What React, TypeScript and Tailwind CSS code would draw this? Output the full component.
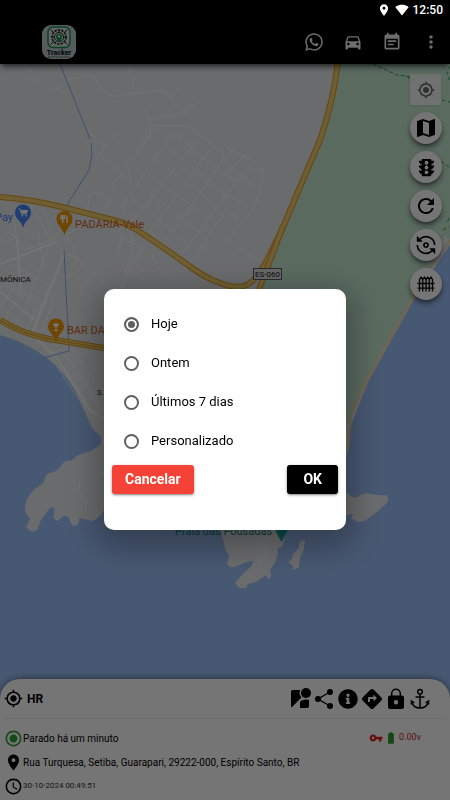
import React, { useState } from 'react';
import { FaInfoCircle, FaWhatsapp } from 'react-icons/fa';
import {
  MdAccessTime,
  MdBatteryFull,
  MdDirections,
  MdDirectionsCar,
  MdEventNote,
  MdLocationOn,
  MdMap,
  MdMoreVert,
  MdMyLocation,
  MdRadioButtonChecked,
  MdRefresh,
  MdSignalWifi4Bar,
  MdStreetview,
  MdTraffic,
  MdVpnKey,
} from 'react-icons/md';

const periods = ['Hoje', 'Ontem', 'Últimos 7 dias', 'Personalizado'];

const FenceIcon = () => (
  <svg width="20" height="20" viewBox="0 0 20 20" fill="none" stroke="currentColor" strokeWidth="1.300">
    <path d="M3.500 17.500V5.500L5.100 3.200 6.750 5.500 8.400 3.200 10 5.500 11.600 3.200 13.250 5.500 14.900 3.200 16.500 5.500V17.500M6.750 5.500V17.500M10 5.500V17.500M13.250 5.500V17.500M1.500 9.500H18.500M1.500 14.200H18.500" />
  </svg>
);

const RotateIcon = () => (
  <svg width="22" height="22" viewBox="0 0 24 24" fill="none" stroke="currentColor" strokeWidth="1.800">
    <path d="M5.500 5.500A9.500 9.500 0 0121.500 12M18.500 18.500A9.500 9.500 0 012.500 12" />
    <path d="M2 2v6.500h6.500zM22 22v-6.500h-6.500z" fill="currentColor" stroke="none" />
    <circle cx="12" cy="12" r="2.200" />
  </svg>
);

const ShareIcon = () => (
  <svg width="24" height="24" viewBox="0 0 24 24" fill="currentColor">
    <path d="M18 5L6 12l12 7" fill="none" stroke="currentColor" strokeWidth="1.400" />
    <circle cx="18" cy="5" r="3" />
    <circle cx="6" cy="12" r="3" />
    <circle cx="18" cy="19" r="3" />
  </svg>
);

const LockIcon = () => (
  <svg width="24" height="24" viewBox="0 0 24 24" fill="currentColor">
    <path d="M7.700 9V6.500a4.300 4.300 0 018.600 0V9" fill="none" stroke="currentColor" strokeWidth="1.500" />
    <path fillRule="evenodd" d="M6 8.500h12a2 2 0 012 2V20a2 2 0 01-2 2H6a2 2 0 01-2-2v-9.500a2 2 0 012-2zM12 13a2.200 2.200 0 100 4.400 2.200 2.200 0 000-4.400z" />
  </svg>
);

const AnchorIcon = () => (
  <svg width="24" height="24" viewBox="0 0 24 24" fill="none" stroke="currentColor" strokeWidth="1.500">
    <circle cx="12" cy="4.700" r="2.300" />
    <path d="M12 7v14M7.500 10h9M4 15.500c.8 3.500 4 5.500 8 5.500s7.200-2 8-5.500" />
    <path d="M2.700 12.500v5.200l4.300-2.200zM21.300 12.500v5.200L17 15.500z" fill="currentColor" stroke="none" />
  </svg>
);

const Logo = () => (
  <svg className="size-[34px]" viewBox="0 0 34 34" role="img" aria-label="Tracker">
    <rect width="34" height="34" rx="9" fill="#bcc6c8" />
    <rect x="6" y="2" width="22" height="20.500" rx="5" fill="#d3dbd8" stroke="#0f8f4a" strokeWidth="1.4" />
    <circle cx="17" cy="12" r="7" fill="none" stroke="#20282a" strokeWidth="1.6" strokeDasharray="2.5 1" />
    <circle cx="17" cy="12" r="4.600" fill="none" stroke="#20282a" strokeWidth="1" />
    <path d="M8.500 4.500l3 3M25.500 4.500l-3 3M8.500 19.500l3-3M25.500 19.500l-3-3M17 5v3M9.500 12h3M21.500 12h3" stroke="#20282a" strokeWidth="1" />
    <path d="M17 17c-2-2.500-3-3.700-3-5.300a3 3 0 016 0c0 1.600-1 2.800-3 5.300z" fill="#0f8f4a" />
    <circle cx="17" cy="11.500" r="1.200" fill="#e8efec" />
    <text x="17" y="30" textAnchor="middle" fontSize="7" fontWeight="900" fontFamily="Roboto, sans-serif" fill="#141a1c">
      Tracker
    </text>
    <path d="M6 32h22" stroke="#3b5f60" strokeWidth="1" strokeDasharray="2 .6" />
  </svg>
);

const coast =
  'M0 60H450V245L441 258L417 294L393 337L369 380L359 405L350 428L348 450L340 475L300 530L180 530L103 511Q101 518 92 521Q86 519 79 518Q80 525 74 526Q71 525 69 518Q65 514 62 517L58 521L53 518L55 510Q53 505 50 508L41 520L37 530Q32 534 26 527L30 519Q24 512 25 506Q27 497 34 490L44 482Q45 475 49 473Q57 472 60 467Q66 458 71 461L78 455L91 451Q95 448 99 446Q103 441 100 436L93 429Q86 416 80 401Q71 380 55 365Q32 344 0 335Z';

const highways = [
  'M338 60Q335 95 320 140L303 180L281 232L266 262Q256 280 247 285Q235 290 215 281Q204 277 188 265Q157 243 137 230Q125 222 105 218L66 208Q30 199 0 197',
  'M283 226L271 258L258 292',
  'M0 320Q20 333 49 339L110 349',
];

const streets = [
  // north
  'M29 66Q33 80 45 86Q57 94 62 84Q66 78 78 78Q88 72 95 78Q99 87 105 93Q113 99 126 94L150 92Q164 88 171 98Q175 109 187 110L206 97M126 94Q135 93 133 82Q128 74 129 64M171 98L181 85M187 110L192 103M156 92Q165 87 171 94',
  'M143 109Q151 116 150 126L149 136M150 119L186 113M149 126L190 126L212 143M82 139L110 163L131 182M90 133L97 139L107 150M116 132L97 158M149 136L124 166',
  'M91 191L110 197L106 207M91 191L87 211M131 182L128 173L134 163',
  // east grid
  'M225 146L252 160Q264 163 263 174Q262 195 250 213Q239 226 227 241L258 260M232 150L225 160M245 155L230 170M252 165L238 182L225 173M262 171L252 168M258 188L225 163M248 207L228 195M240 221L225 208',
  'M166 148L208 180L228 198M156 160L199 192L218 207M146 172L190 205L208 219M138 184L181 218L199 232M130 197L172 231L189 245M123 209L162 243L180 257M176 134L215 168L235 182M186 124L225 155',
  'M160 124L109 190M176 131L120 207M198 139L132 222M212 147L150 232M225 157L165 242M236 182L176 262M225 211L185 270M209 242L195 260',
  // west town
  'M0 228L17 238L25 250L51 240L66 224M0 264L31 252L56 242M17 238L21 295M0 277L20 291L40 300M56 242L64 254L31 340M31 205L50 241M10 202L17 238M42 208L56 242M13 265L51 286M51 240L28 300M38 232L44 267L20 278M0 245L17 236M64 254Q82 258 82 266L65 278M66 235L82 226',
  'M0 279L35 308M0 292L34 319M0 306L27 330M10 272L0 289M18 280L0 308M26 287L5 319M34 294L14 327M37 306L25 335M4 285L36 301M0 324L30 333L55 355L74 387L91 411L105 420M41 301L27 329M48 290L36 320M55 294L42 333',
  'M53 341L73 365L90 392L99 409L92 413L76 396L60 371L43 345M60 337L79 358L95 384M68 348L50 353M77 356L61 368M82 369L67 379M90 382L76 392M96 393L82 402M75 362L88 350',
  // centre
  'M123 209Q125 217 132 222M118 222L121 238L118 254L113 262M132 226L132 254L125 273M121 238L145 248M145 248L131 265L120 290M152 255Q157 270 171 280M136 262L144 270L132 276M97 270Q84 280 80 296M104 282L94 290M66 237Q80 253 73 268',
  // south peninsula
  'M110 470L98 475L82 479Q77 486 80 492L86 500L86 506M257 549L267 546L266 556L259 562Z M262 538L269 540L274 530M256 535L262 550',
];

const TrackerMap = () => (
  <svg
    className="absolute inset-0 size-full"
    viewBox="0 64 450 636"
    preserveAspectRatio="xMidYMin slice"
    fontFamily="Roboto, sans-serif"
    aria-hidden="true"
  >
    <rect y="60" width="450" height="700" fill="#9cc0f9" />
    <path d={coast} fill="#e8eaed" />
    <path d="M338 60Q335 95 320 140L303 180L283 232L258 292L230 440L345 440L347 425L356 405L368 377L392 333L415 293L450 238V60Z" fill="#c5e8d0" />
    <path d="M450 240L432 265L416 292L392 335L368 378L351 414L347 450" fill="none" stroke="#efdcb5" strokeWidth="3" />
    <path d="M447 237L435 260" stroke="#e8eaed" strokeWidth="5" />

    <g fill="#e8eaed">
      <path d="M340 490L348 493Q352 499 357 497L360 495Q366 492 372 494Q379 496 386 495Q390 498 387 503L378 511L370 517Q362 524 356 521L351 518L353 514L340 516Z" />
      <path d="M220 525L225 548L229 556L227 564Q230 568 235 567L247 562L253 561Q253 566 247 570L242 575L235 583L239 588L246 588L248 584L256 582L266 575L268 579Q273 578 270 570Q278 561 278 548L282 547L287 530Z" />
      <path d="M305 539L300 542L298 549L293 554L292 559L288 562L293 566V570L299 567L300 558L304 549Z" />
    </g>

    <g fill="none" stroke="#fff" strokeLinejoin="round" strokeWidth="1" opacity=".7">
      {streets.map((d) => (
        <path key={d} d={d} />
      ))}
    </g>
    <path d="M0 264L31 252L56 242M17 238L21 290M64 254L31 335M0 292L34 319M30 333L55 355L91 411L105 420" fill="none" stroke="#fff" strokeWidth="2" opacity=".7" />

    <path d="M60 64L90 139M91 143L92 154L89 170L67 205M64 250L68 330L69 351L43 358" fill="none" stroke="#86aef2" strokeWidth="1" />
    <path d="M373 64L397 75L407 76L411 82M436 159L440 160M443 230L449 227M441 161L450 168M449 218L447 223" fill="none" stroke="#2c9c5b" strokeWidth="1" strokeDasharray="4 2" />
    <path d="M408 76L438 99L450 102M450 66L447 73L450 82" fill="none" stroke="#2c9c5b" strokeWidth="1" strokeDasharray="3 3" />

    {highways.map((d) => (
      <g key={d} fill="none">
        <path d={d} stroke="#d99a1c" strokeWidth="6" />
        <path d={d} stroke="#f2cd70" strokeWidth="4" />
      </g>
    ))}
    <path d="M0 320Q20 333 49 339L110 349" fill="none" stroke="#d99a1c" strokeWidth="1" />

    <rect x="253.500" y="268.500" width="28" height="11" fill="#dfe1e3" stroke="#5c5c5c" />
    <text x="267.500" y="277" textAnchor="middle" fontSize="8" fill="#202124">ES-060</text>

    {/* Points of interest */}
    <g fill="#4285f4">
      <path d="M23 228C21 220 15 219 15 212.500a8 8 0 0116 0C31 219 25 220 23 228Z" />
      <path d="M18.500 209h1.500l1.500 5h5.500" fill="none" stroke="#fff" strokeWidth="1" />
      <path d="M20.500 210h7.500l-1 3.500h-5.500zM21.500 215h1.500v1.500h-1.500zM25.500 215h1.500v1.500h-1.500z" fill="#fff" />
      <text x="-5" y="221" fontSize="11">Pay</text>
    </g>
    <g fill="#f29900">
      <path d="M64.500 235C62 227 56.500 225 56.500 219a8 8 0 0116 0C72.500 225 67 227 64.500 235Z" />
      <path d="M56 342C54 334 48 332 48 326.500a8 8 0 0116 0C64 332 58 334 56 342Z" />
      <path d="M61 215v3.500h3.500V215M62.750 215v8M67 223v-7.500" fill="none" stroke="#fff" strokeWidth="1.500" />
      <path d="M53 324h6l-3 3.500zM56 327v3.500M54 330.500h4" fill="#fff" stroke="#fff" strokeWidth="1" />
    </g>
    <g fill="#d5641c" fontSize="11">
      <text x="75" y="228">PADARIA-Vale</text>
      <text x="67" y="334">BAR DA</text>
    </g>
    <g fill="#202124" fontSize="8">
      <text x="0" y="282">MÔNICA</text>
      <text x="97" y="395">S.</text>
    </g>
    <path d="M281.500 542L274 528H289Z" fill="#12a3a8" />
    <text x="175" y="535" fontSize="11" fill="#158a80">Praia das Pousadas</text>
  </svg>
);

const mapActions = [
  { label: 'Tipo de mapa', icon: <MdMap size={24} /> },
  { label: 'Trânsito', icon: <MdTraffic size={23} /> },
  { label: 'Atualizar', icon: <MdRefresh size={24} /> },
  { label: 'Girar', icon: <RotateIcon /> },
  { label: 'Cerca', icon: <FenceIcon /> },
];

const vehicleActions = [
  { label: 'Street view', icon: <MdStreetview size={24} /> },
  { label: 'Compartilhar', icon: <ShareIcon /> },
  { label: 'Informações', icon: <FaInfoCircle size={20} /> },
  { label: 'Rota', icon: <MdDirections size={24} /> },
  { label: 'Bloquear', icon: <LockIcon /> },
  { label: 'Âncora', icon: <AnchorIcon /> },
];

const PeriodDialog: React.FC = () => {
  const [period, setPeriod] = useState('Hoje');

  return (
    <div className="fixed inset-0 z-10 flex items-center justify-center bg-black/54 pt-[18px]">
      <form
        role="dialog"
        aria-label="Período"
        className="w-[242px] rounded-[10px] bg-white px-2 pt-4 pb-9 shadow-[0_10px_32px_8px_rgba(0,0,0,0.3)]"
        onSubmit={(e) => e.preventDefault()}
      >
        {periods.map((item) => (
          <label key={item} className="flex h-[39px] items-center gap-3 pl-3 text-[13px] text-black">
            <input
              type="radio"
              name="period"
              value={item}
              checked={period === item}
              onChange={() => setPeriod(item)}
              className="size-[15px] appearance-none rounded-full border-2 border-[#606060] checked:bg-[#606060] checked:shadow-[inset_0_0_0_2px_#fff]"
            />
            {item}
          </label>
        ))}
        <div className="mt-1 flex justify-between text-sm font-bold text-white">
          <button type="button" className="h-[29px] rounded-[3px] bg-[#f44336] px-[13px] shadow-sm shadow-black/40">
            Cancelar
          </button>
          <button type="submit" className="h-[29px] rounded-[3px] bg-black px-4 shadow-sm shadow-black/40">
            OK
          </button>
        </div>
      </form>
    </div>
  );
};

const App: React.FC = () => {
  return (
    <div className="flex min-h-screen flex-col bg-white font-[Roboto,sans-serif] text-black">
      {/* Status bar */}
      <div className="relative z-20 flex h-5 items-center justify-end gap-1 bg-black pr-[7px] text-white">
        <MdLocationOn size={14} />
        <MdSignalWifi4Bar size={14} />
        <span className="text-xs font-medium">12:50</span>
      </div>

      <header className="relative z-[1] flex h-11 items-center justify-between bg-black pr-[7px] pl-[42px] shadow-md shadow-black/50">
        <Logo />
        <nav className="flex items-center gap-[15px] text-[#f0f0f0]">
          <button type="button" aria-label="WhatsApp" className="flex size-6 items-center justify-center">
            <FaWhatsapp size={20} />
          </button>
          <button type="button" aria-label="Veículos" className="flex size-6 items-center justify-center">
            <MdDirectionsCar size={20} />
          </button>
          <button type="button" aria-label="Eventos" className="flex size-6 items-center justify-center">
            <MdEventNote size={20} />
          </button>
          <button type="button" aria-label="Mais opções" className="flex size-6 items-center justify-center">
            <MdMoreVert size={20} />
          </button>
        </nav>
      </header>

      <main className="relative flex-1 overflow-hidden">
        <TrackerMap />
        <div className="absolute top-2.5 right-2 flex flex-col items-start gap-[7px]">
          <button type="button" aria-label="Minha localização" className="flex size-[31px] items-center justify-center rounded-[1px] bg-white/75 text-[#666] shadow-sm">
            <MdMyLocation size={18} />
          </button>
          {mapActions.map(({ label, icon }) => (
            <button
              key={label}
              type="button"
              aria-label={label}
              className="flex size-8 items-center justify-center rounded-full bg-white shadow-md shadow-black/50"
            >
              {icon}
            </button>
          ))}
        </div>
      </main>

      {/* Vehicle sheet */}
      <section className="relative -mt-5 rounded-t-[20px] bg-white px-1 pb-0.5 shadow-[0_-1px_6px_rgba(0,0,0,0.4)]">
        <div className="flex h-10 items-center justify-between border-b border-[#ececec] pr-3.5">
          <h1 className="flex items-center gap-1 text-xs font-bold">
            <MdMyLocation size={19} />
            HR
          </h1>
          <div className="flex">
            {vehicleActions.map(({ label, icon }) => (
              <button key={label} type="button" aria-label={label} className="flex size-6 items-center justify-center">
                {icon}
              </button>
            ))}
          </div>
        </div>
        <div className="pt-[7px] text-[10px]">
          <div className="flex h-6 items-center justify-between pr-[25px]">
            <p className="flex items-center">
              <MdRadioButtonChecked size={19} className="text-[#2e9e33]" />
              Parado há um minuto
            </p>
            <p className="flex items-center gap-px text-[9px] text-[#c62828]">
              <MdVpnKey size={14} className="text-[#e02020]" />
              <MdBatteryFull size={14} className="text-[#2e9e33]" />
              0.00v
            </p>
          </div>
          <p className="flex h-6 items-center">
            <MdLocationOn size={19} />
            Rua Turquesa, Setiba, Guarapari, 29222-000, Espírito Santo, BR
          </p>
          <p className="flex h-6 items-center text-[8px] text-[#333]">
            <MdAccessTime size={19} className="text-black" />
            30-10-2024 00:49:51
          </p>
        </div>
      </section>

      <PeriodDialog />
    </div>
  );
};

export default App;
